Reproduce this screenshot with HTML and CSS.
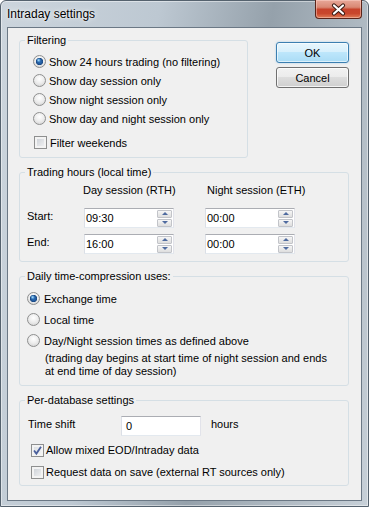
FILE: index.html
```html
<!DOCTYPE html>
<html lang="en">
<head>
    <meta charset="UTF-8">
    <meta name="viewport" content="width=device-width, initial-scale=1.0">
    <title>Intraday settings</title>
    <link rel="stylesheet" href="styles.css">
</head>
<body>
    <div class="window">
        <div class="titlebar">
            <span class="title">Intraday settings</span>
            <button class="close" aria-label="Close">
                <svg width="45" height="17" viewBox="0 0 45 17">
                    <path d="M18 4.5 L27 12.5 M27 4.5 L18 12.5" stroke="#3a1a12" stroke-width="4.2" stroke-linecap="round"/>
                    <path d="M18 4.5 L27 12.5 M27 4.5 L18 12.5" stroke="#ffffff" stroke-width="2.2" stroke-linecap="round"/>
                </svg>
            </button>
        </div>

        <div class="client">
            <div class="top-row">
                <fieldset class="group filtering">
                    <legend>Filtering</legend>
                    <div class="group-body">
                        <label class="option"><span class="radio on"></span>Show 24 hours trading (no filtering)</label>
                        <label class="option"><span class="radio"></span>Show day session only</label>
                        <label class="option"><span class="radio"></span>Show night session only</label>
                        <label class="option"><span class="radio"></span>Show day and night session only</label>
                        <label class="option check-row"><span class="check"></span>Filter weekends</label>
                    </div>
                </fieldset>
                <div class="buttons">
                    <button class="btn default">OK</button>
                    <button class="btn">Cancel</button>
                </div>
            </div>

            <fieldset class="group trading">
                <legend>Trading hours (local time)</legend>
                <div class="group-body hours-grid">
                    <span class="col-head col-day">Day session (RTH)</span>
                    <span class="col-head col-night">Night session (ETH)</span>

                    <span class="row-label row-start">Start:</span>
                    <div class="field spin-field col-day row-start">
                        <span>09:30</span>
                        <span class="spin"><span class="spin-btn up"></span><span class="spin-btn down"></span></span>
                    </div>
                    <div class="field spin-field col-night row-start">
                        <span>00:00</span>
                        <span class="spin"><span class="spin-btn up"></span><span class="spin-btn down"></span></span>
                    </div>

                    <span class="row-label row-end">End:</span>
                    <div class="field spin-field col-day row-end">
                        <span>16:00</span>
                        <span class="spin"><span class="spin-btn up"></span><span class="spin-btn down"></span></span>
                    </div>
                    <div class="field spin-field col-night row-end">
                        <span>00:00</span>
                        <span class="spin"><span class="spin-btn up"></span><span class="spin-btn down"></span></span>
                    </div>
                </div>
            </fieldset>

            <fieldset class="group daily">
                <legend>Daily time-compression uses:</legend>
                <div class="group-body">
                    <label class="option"><span class="radio on"></span>Exchange time</label>
                    <label class="option"><span class="radio"></span>Local time</label>
                    <label class="option"><span class="radio"></span>Day/Night session times as defined above</label>
                    <p class="note">(trading day begins at start time of night session and ends at end time of day session)</p>
                </div>
            </fieldset>

            <fieldset class="group database">
                <legend>Per-database settings</legend>
                <div class="group-body">
                    <div class="shift-row">
                        <span class="row-label shift-label">Time shift</span>
                        <div class="field shift-field">0</div>
                        <span class="row-label hours">hours</span>
                    </div>
                    <label class="option db-check first"><span class="check on">
                        <svg width="11" height="11" viewBox="0 0 11 11"><path d="M2 5.5 L4.4 8.6 L9 1.8" fill="none" stroke="#4a5f9c" stroke-width="1.8"/></svg>
                    </span>Allow mixed EOD/Intraday data</label>
                    <label class="option db-check"><span class="check"></span>Request data on save (external RT sources only)</label>
                </div>
            </fieldset>
        </div>
    </div>
</body>
</html>
```

FILE: styles.css
```css
body {
    margin: 0;
    font-family: "Liberation Sans", Arial, sans-serif;
    font-size: 11px;
    color: #000;
}

.window {
    width: 369px;
    height: 507px;
    box-sizing: border-box;
    border: 1px solid #55626e;
    border-radius: 6px 6px 0 0;
    background: linear-gradient(100deg, #ccd5dd 0%, #bdc8d2 35%, #95a1ab 60%, #a7b2bb 74%, #c7d0d8 100%);
    box-shadow: inset 0 0 0 1px rgba(255, 255, 255, 0.45);
}

.titlebar {
    height: 26px;
    display: flex;
    justify-content: space-between;
    align-items: flex-start;
    padding-left: 6px;
}

.title {
    font-size: 12px;
    line-height: 14px;
    margin-top: 6px;
    text-shadow: 0 0 6px rgba(255, 255, 255, 0.9), 0 0 2px rgba(255, 255, 255, 0.9);
}

.close {
    width: 47px;
    height: 19px;
    margin: -1px 6px 0 0;
    padding: 0;
    border: 1px solid #5a2419;
    border-top: none;
    border-radius: 0 0 4px 4px;
    background: linear-gradient(#e8a899 0%, #d98874 40%, #c7432b 52%, #c9472c 75%, #e07d56 100%);
    box-shadow: inset 0 0 0 1px rgba(255, 220, 210, 0.45);
    display: flex;
    align-items: center;
    justify-content: center;
}

.client {
    width: 355px;
    height: 474px;
    margin: 0 6px;
    box-sizing: border-box;
    border: 1px solid #6b7885;
    background: #f0f0f0;
    padding: 6px 12px 0 11px;
}

.top-row {
    display: flex;
    gap: 28px;
}

.group {
    margin: 8px 0 0;
    padding: 0;
    border: 1px solid #d5dfe5;
    border-radius: 3px;
    min-width: 0;
    box-sizing: border-box;
    width: 330px;
}

.group legend {
    margin-left: 5px;
    padding: 0 2px;
    line-height: 13px;
}

.filtering {
    margin-top: 0;
    width: 230px;
}

.filtering .group-body {
    padding: 5px 0 5px 13px;
}

.option {
    display: flex;
    align-items: center;
    gap: 3px;
    height: 19px;
}

.check-row {
    margin-top: 5px;
    margin-left: 1px;
}

.radio {
    flex: none;
    width: 13px;
    height: 13px;
    box-sizing: border-box;
    border: 1px solid #8e8f8f;
    border-radius: 50%;
    background: radial-gradient(circle at 50% 35%, #ffffff 0, #ececec 50%, #cdcdcd 100%);
}

.radio.on {
    background:
        radial-gradient(circle at 42% 38%, #b8e6ff 0, rgba(120, 190, 240, 0.6) 1.2px, rgba(0, 0, 0, 0) 2.2px),
        radial-gradient(circle, #2f72ba 0, #22599c 2.6px, #17457f 3.4px, rgba(23, 69, 127, 0) 3.9px),
        radial-gradient(circle at 50% 35%, #ffffff 0, #ececec 50%, #cdcdcd 100%);
}

.check {
    flex: none;
    width: 13px;
    height: 13px;
    box-sizing: border-box;
    border: 1px solid #8e8f8f;
    background: linear-gradient(135deg, #c7ccd3, #f6f6f6);
    box-shadow: inset 0 0 0 2px #f3f3f3;
    display: flex;
}

.check.on {
    background: linear-gradient(135deg, #d7dbe0, #f7f7f7);
}

.buttons {
    display: flex;
    flex-direction: column;
    gap: 4px;
    margin-top: 8px;
}

.btn {
    width: 73px;
    height: 21px;
    padding: 0;
    box-sizing: border-box;
    border: 1px solid #707070;
    border-radius: 3px;
    font-family: "Liberation Sans", Arial, sans-serif;
    font-size: 11px;
    color: #000;
    background: linear-gradient(#f2f2f2 0, #ebebeb 50%, #dddddd 50%, #cfcfcf 100%);
    box-shadow: inset 0 0 0 1px rgba(255, 255, 255, 0.75);
}

.btn.default {
    border-color: #3c7fb1;
    background: linear-gradient(#e8f6fd 0, #d6effc 50%, #bde6fb 50%, #aadcf6 100%);
    box-shadow: inset 0 0 0 1px rgba(255, 255, 255, 0.6), 0 0 2px rgba(80, 170, 230, 0.5);
}

.hours-grid {
    display: grid;
    grid-template-columns: 57px 90px 31px 90px;
    grid-template-rows: 19px 20px 20px;
    row-gap: 6px;
    padding: 4px 0 7px 7px;
}

.col-head {
    line-height: 14px;
    grid-row: 1;
    white-space: nowrap;
}

.col-day {
    grid-column: 2;
}

.col-night {
    grid-column: 4;
}

.row-start {
    grid-row: 2;
}

.row-end {
    grid-row: 3;
}

.col-head.col-day {
    margin-left: -1px;
}

.col-head.col-night {
    margin-left: 2px;
}

.row-label {
    line-height: 13px;
    padding-top: 2px;
}

.hours-grid .row-label {
    grid-column: 1;
}

.field {
    box-sizing: border-box;
    height: 20px;
    border: 1px solid;
    border-color: #abadb3 #e2e3ea #e3e9ef #dbdfe6;
    background: #fff;
    display: flex;
    align-items: center;
}

.spin-field {
    width: 90px;
    justify-content: space-between;
    padding: 0 1px 0 1px;
}

.spin {
    display: flex;
    flex-direction: column;
    gap: 1px;
}

.spin-btn {
    width: 15px;
    height: 8px;
    box-sizing: border-box;
    border: 1px solid #c2c4c9;
    border-radius: 1px;
    background: linear-gradient(#f6f6f6, #dedede);
    display: flex;
    align-items: center;
    justify-content: center;
}

.spin-btn::before {
    content: "";
    border-left: 3px solid transparent;
    border-right: 3px solid transparent;
}

.spin-btn.up::before {
    border-bottom: 3px solid #4f6b9f;
}

.spin-btn.down::before {
    border-top: 3px solid #4f6b9f;
}

.daily .group-body {
    padding: 5px 0 7px 7px;
}

.daily .option {
    height: 21px;
    gap: 4px;
}

.note {
    margin: 1px 0 0 18px;
    line-height: 13px;
    width: 290px;
}

.database .group-body {
    padding: 9px 0 2px 8px;
}

.shift-row {
    display: flex;
    align-items: flex-start;
    height: 20px;
}

.shift-label {
    width: 93px;
}

.shift-field {
    width: 80px;
    padding-left: 4px;
}

.hours {
    margin-left: 10px;
}

.db-check {
    height: 22px;
    margin-left: 3px;
    gap: 2px;
}

.db-check.first {
    margin-top: 3px;
}
```
